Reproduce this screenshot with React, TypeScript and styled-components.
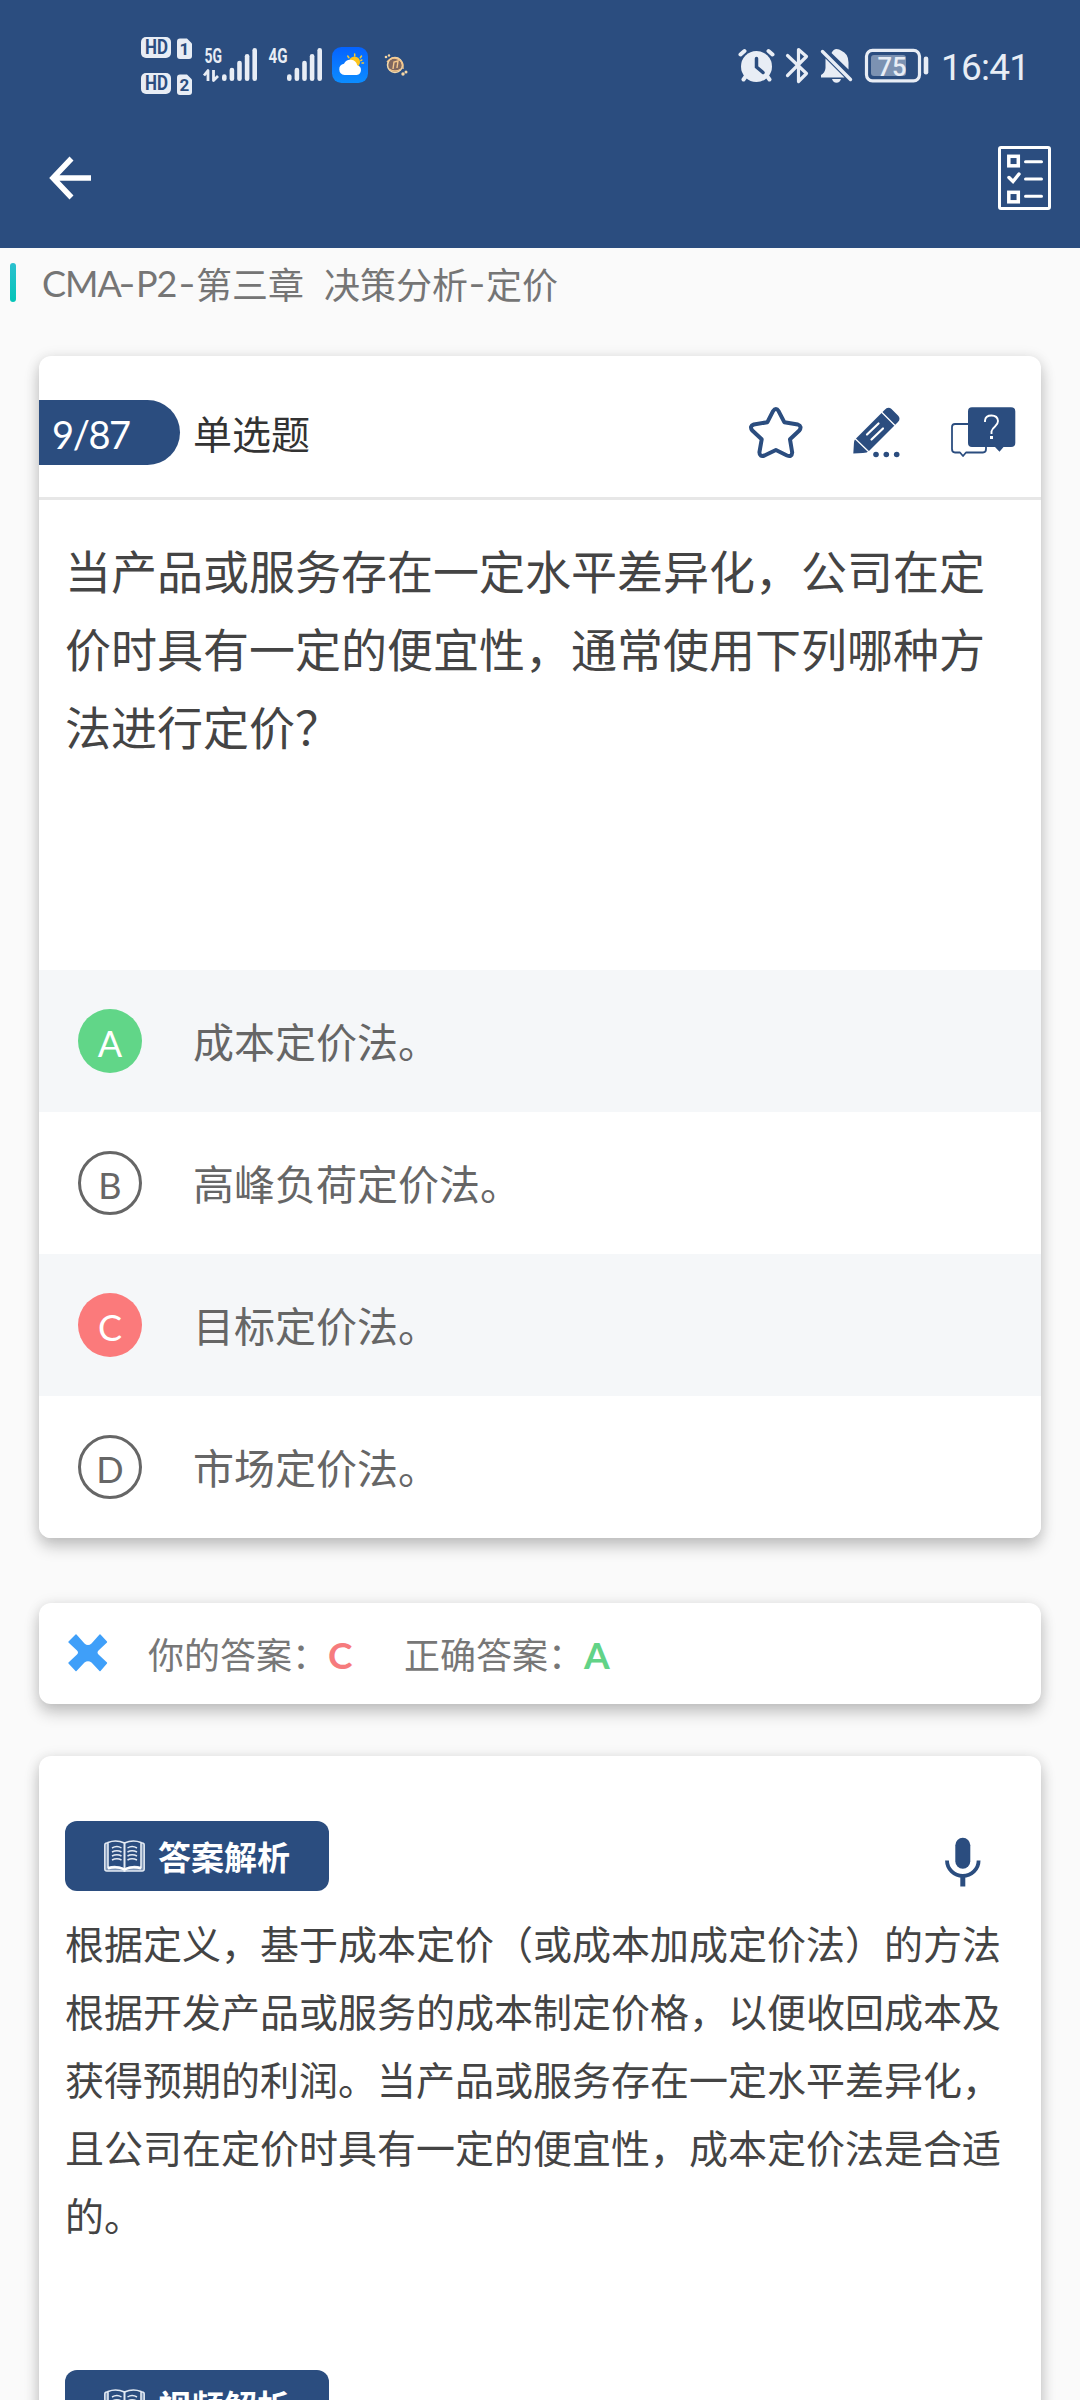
import React from "react";
import styled, { createGlobalStyle, css } from "styled-components";

const NAVY = "#2b4d7f";
const CJK = `"Noto Sans CJK SC", sans-serif`;

const GlobalStyle = createGlobalStyle`
  * { box-sizing: border-box; }
  body { margin: 0; background: #fafafa; font-family: ${CJK}; }
  svg { display: block; flex: none; }
`;

const Screen = styled.div`
  width: 1080px;
  height: 2400px;
  overflow: hidden;
  background: #fafafa;
`;

const Header = styled.header`
  height: 248px;
  background: ${NAVY};
`;

const StatusBar = styled.div`
  height: 130px;
  display: flex;
  justify-content: space-between;
  padding: 30px 53px 0 138px;
`;

const StatusGroup = styled.div`
  display: flex;
  align-items: flex-start;
`;

const Clock = styled.span`
  margin: 16px 0 0 10px;
  width: 86px;
  font: 400 37px/44px Roboto, sans-serif;
  letter-spacing: -0.8px;
  white-space: nowrap;
  color: #e8edf5;
`;

const NavBar = styled.nav`
  display: flex;
  justify-content: space-between;
  padding: 16px 29px 0 48px;
`;

const Chapter = styled.div`
  height: 108px;
  display: flex;
  align-items: flex-start;
  gap: 26px;
  padding: 15px 0 0 10px;
`;

const ChapterMark = styled.span`
  width: 6px;
  height: 39px;
  border-radius: 3px;
  background: linear-gradient(#2bc0cf, #04c5b8);
`;

const ChapterTitle = styled.h1`
  display: flex;
  margin: -6px 0 0;
  font: 400 36px/52px ${CJK};
  color: #757575;
  white-space: pre;
`;

const Latin = styled.span<{ $width: number }>`
  width: ${(p) => p.$width}px;
  font-family: Lato, sans-serif;
  letter-spacing: -1px;
`;

const Dash = styled.span`
  width: 18px;
  font-family: Lato, sans-serif;
  text-align: center;
  transform: scaleX(1.3);
`;

const Card = styled.section`
  margin: 0 39px;
  background: #fff;
  border-radius: 12px;
  box-shadow: 0 9px 16px rgba(0, 0, 0, 0.2), 0 1px 14px rgba(0, 0, 0, 0.1);
`;

const QuestionCard = styled(Card)`
  height: 1182px;
  overflow: hidden;
`;

const QuestionHead = styled.div`
  height: 144px;
  display: flex;
  align-items: flex-start;
  padding: 44px 24px 0 0;
  border-bottom: 3px solid #e7e7e7;
`;

const Counter = styled.span`
  width: 141px;
  height: 65px;
  padding-left: 13px;
  border-radius: 0 33px 33px 0;
  background: ${NAVY};
  color: #fff;
  font: 400 38px/69px Lato, sans-serif;
  letter-spacing: -1.4px;
`;

const Kind = styled.span`
  flex: 1;
  margin-left: 13px;
  font-size: 39px;
  line-height: 64px;
  color: #333;
`;

const Tools = styled.div`
  display: flex;
  gap: 50px;
  margin-top: 7px;
`;

const Stem = styled.p`
  height: 470px;
  margin: 0;
  padding: 30px 26px 0;
  font-size: 46px;
  line-height: 78px;
  color: #444;
`;

const Option = styled.div<{ $shaded: boolean }>`
  height: 142px;
  display: flex;
  align-items: center;
  gap: 51px;
  padding-left: 39px;
  background: ${(p) => (p.$shaded ? "#f5f7f9" : "#fff")};
  color: #666;
  font-size: 41px;
  line-height: 60px;
`;

type Mark = "right" | "wrong" | "none";

const Bullet = styled.span<{ $mark: Mark }>`
  width: 64px;
  height: 64px;
  display: flex;
  align-items: center;
  justify-content: center;
  border-radius: 50%;
  padding-top: 4px;
  font: 400 36px/44px Lato, sans-serif;
  ${(p) =>
    p.$mark === "none"
      ? css`
          border: 3px solid #666;
          color: #666;
        `
      : css`
          background: ${p.$mark === "right" ? "#61d688" : "#fb7a7b"};
          color: #fff;
        `}
`;

const OptionText = styled.span`
  padding-bottom: 2px;
`;

const ResultCard = styled(Card)`
  height: 101px;
  margin-top: 65px;
  display: flex;
  align-items: center;
  padding: 0 0 2px 28px;
  font-size: 36px;
  color: #777;
  white-space: nowrap;
`;

const ResultLabel = styled.span<{ $left: number }>`
  margin-left: ${(p) => p.$left}px;
  width: 180px;
  line-height: 52px;
`;

const ResultLetter = styled.b<{ $ok: boolean }>`
  width: 28px;
  font: 700 37px/44px Lato, sans-serif;
  padding-top: 4px;
  color: ${(p) => (p.$ok ? "#62d387" : "#f67b7d")};
`;

const AnalysisCard = styled(Card)`
  height: 760px;
  margin-top: 52px;
  padding: 65px 26px 0;
`;

const SectionRow = styled.div`
  display: flex;
  justify-content: space-between;
  padding-right: 33px;
`;

const Badge = styled.div`
  width: 264px;
  height: 70px;
  display: flex;
  gap: 13px;
  padding: 19px 0 0 39px;
  border-radius: 12px;
  background: ${NAVY};
  color: #fff;
`;

const BadgeText = styled.b`
  font-size: 33px;
  line-height: 48px;
  margin-top: -8px;
`;

const MicSlot = styled.div`
  margin-top: 16px;
`;

const Explanation = styled.p`
  margin: 17px 0 122px;
  font-size: 39px;
  line-height: 68px;
  color: #444;
`;

const light = "#e8edf5";

const SimBadges = () => (
  <svg width="60" height="70" viewBox="138 30 60 70">
    {[0, 36].map((dy, i) => (
      <g key={dy} transform={`translate(0 ${dy})`}>
        <rect x="141" y="37" width="30" height="21" rx="5" fill={light} />
        <text x="145" y="54.3" fontFamily="Roboto" fontWeight="700" fontSize="19.5" textLength="23" lengthAdjust="spacingAndGlyphs" fill={NAVY}>HD</text>
        <path d="M180 38.5h7l5 5V56q0 3-3 3h-9q-3 0-3-3V41.500q0-3 3-3z" fill={light} />
        <text x="184.300" y="54.500" textAnchor="middle" fontFamily="Roboto" fontWeight="700" fontSize="17" fill={NAVY}>{i + 1}</text>
      </g>
    ))}
  </svg>
);

const Signal = ({ label, data, width }: { label: string; data?: boolean; width: number }) => (
  <svg width={width} height="60" viewBox={`0 30 ${width} 60`}>
    <text x={data ? 6.5 : 5.5} y="62.700" fontFamily="Roboto" fontWeight="700" fontSize="19.500" textLength={data ? 17.5 : 19} lengthAdjust="spacingAndGlyphs" fill={light}>{label}</text>
    {data && <path d="M6 75.500 10 70.500V81M15.500 70V80.500L20 76" fill="none" stroke={light} strokeWidth="2.800" strokeLinejoin="round" />}
    {[74.3, 67.7, 60.7, 54, 48].map((top, i) => (
      <rect key={top} x={24 + i * 7.6} y={top} width="4.600" height={81 - top} rx="2.300" fill={light} />
    ))}
  </svg>
);

const Weather = () => (
  <svg width="52" height="60" viewBox="324 30 52 60">
    <defs>
      <linearGradient id="sky" x1="0" y1="0" x2="0" y2="1">
        <stop offset="0" stopColor="#0563ff" />
        <stop offset="1" stopColor="#0c8dff" />
      </linearGradient>
    </defs>
    <rect x="332" y="47" width="36" height="36" rx="9.500" fill="url(#sky)" />
    <g stroke="#f5c832" strokeWidth="1.500" strokeLinecap="round">
      <path d="M354.700 54v2M347.700 56l1.200 1.700M361.500 56l-1.200 1.700M363.500 63h-1.500M361.800 60l-1 .6" />
    </g>
    <circle cx="354.500" cy="62" r="5.500" fill="#fcc41c" />
    <path d="M344.500 75a5.700 5.700 0 0 1-.5-11.300 7 7 0 0 1 13.200 1.500 5 5 0 0 1-.5 9.800z" fill="#fff" />
  </svg>
);

const Planet = () => (
  <svg width="40" height="60" viewBox="376 30 40 60">
    <circle cx="395" cy="65" r="7.500" fill="#80675f" stroke="#f1d9ad" strokeWidth="1.500" />
    <path d="M387 62q5-6 11-3t5 10M389 69q6 4 12 0M393 69l1-7 4-1-1 7" fill="none" stroke="#f4c68b" strokeWidth="1.400" />
    <g fill="#f6d7a5">
      <circle cx="386" cy="57" r="1.300" />
      <circle cx="389" cy="55.500" r="1.200" />
      <circle cx="403" cy="74" r="1.700" />
      <circle cx="406" cy="72" r="1.500" />
    </g>
  </svg>
);

const StatusIcons = () => (
  <svg width="197" height="60" viewBox="734 30 197 60">
    <g fill="none" stroke={light} strokeLinecap="round">
      <path d="M740.500 54.500 744.500 51M772.500 54.500 768.500 51" strokeWidth="4" />
      <path d="M743.500 79.500 746 76M769.500 79.500 767 76" strokeWidth="4" />
    </g>
    <circle cx="756.500" cy="66.500" r="15.500" fill={light} />
    <path d="M756.500 58.500V67l6.500 5.500" fill="none" stroke={NAVY} strokeWidth="3.500" strokeLinecap="round" />
    <path d="M787.500 55.500 806.500 73.500 798.500 81.500V49.500L806.500 56.500 787.500 75.500" fill="none" stroke={light} strokeWidth="3.200" strokeLinejoin="round" strokeLinecap="round" />
    <path d="M831.500 53q2-4 5-4t4.500 1.500q7.500 3 7.500 12V69.500zM825.500 58.500 844.500 77.500H821v-2.500q4-2 4.500-7z" fill={light} />
    <path d="M832 79h9q-1 3.700-4.500 3.700T832 79z" fill={light} />
    <path d="M822.500 51.500 850.500 79.500" stroke={light} strokeWidth="3.400" strokeLinecap="round" />
    <rect x="866.500" y="50.300" width="53" height="30.500" rx="6" fill="none" stroke={light} strokeWidth="3.200" />
    <rect x="871" y="55" width="35" height="21" rx="3" fill="#7c92b2" />
    <text x="877.500" y="75.800" fontFamily="Roboto" fontWeight="500" fontSize="26" textLength="29" lengthAdjust="spacingAndGlyphs" fill={light}>75</text>
    <rect x="923.700" y="56.500" width="4.600" height="18" rx="2.300" fill={light} />
  </svg>
);

const BackArrow = () => (
  <svg width="46" height="64" viewBox="48 146 46 64">
    <path d="M91 178H53M71.500 158.500 53 178 71.500 197.500" fill="none" stroke="#fff" strokeWidth="5.500" />
  </svg>
);

const Checklist = () => (
  <svg width="53" height="64" viewBox="998 146 53 64" fill="none" stroke="#fff" strokeWidth="3">
    <rect x="999.500" y="147.500" width="50" height="61" rx="1.500" />
    <rect x="1008.800" y="156.300" width="9.500" height="9.500" strokeWidth="3.500" />
    <rect x="1008.800" y="192.300" width="9.500" height="9.500" strokeWidth="3.500" />
    <path d="M1009 177.500 1013 181.500 1019 174" strokeWidth="3.500" strokeLinecap="round" />
    <path d="M1025.500 161.700h16M1025.500 179h16M1025.500 196.300h16" strokeLinecap="round" />
  </svg>
);

const Star = () => (
  <svg width="54" height="52" viewBox="0 0 54 52">
    <path d="M23.900 4.300Q27-.2 29.700 4.300L35.300 15.200 48.800 17.500Q53.400 19.400 50.300 23.500L41 32.300 43.200 45.500Q42.800 50.300 38 48.500L26.900 43 15.500 48.500Q10.500 50.200 10.400 45.300L12.700 32.300 3.300 23.500Q.1 19.200 4.800 17.500L18.400 15.200Z" fill="none" stroke={NAVY} strokeWidth="4" strokeLinejoin="round" />
  </svg>
);

const Pencil = () => (
  <svg width="48" height="52" viewBox="0 0 48 52">
    <path d="M31.500 3Q35-1 38.500 2L45 8.500Q48 11.500 45 15L16.500 43.500Q14 46 10 46L.3 46.500 1 35Q1 33 3.500 31Z" fill={NAVY} />
    <path d="M28.500 5 42 18.500M2 31.500 16 45" fill="none" stroke="#fff" strokeWidth="1.300" />
    <path d="M14 27.500 25.500 16.500M18.500 32.500 30 21.500" stroke="#fff" strokeWidth="2.200" strokeLinecap="round" />
    <g fill={NAVY}>
      <circle cx="23" cy="47.500" r="2.800" />
      <circle cx="33.300" cy="47.500" r="2.800" />
      <circle cx="43.700" cy="47.500" r="2.800" />
    </g>
  </svg>
);

const Bubbles = () => (
  <svg width="66" height="52" viewBox="0 0 66 52">
    <path d="M17 17H4Q1 17 1 20V42Q1 45.500 4 45.500H9L12 49 15 45.500H32Q35 45.500 35 42V40" fill="none" stroke={NAVY} strokeWidth="1.800" strokeLinejoin="round" />
    <path d="M21 0.300H60Q64.300 .3 64.300 4.500V36Q64.300 40 60 40H52.500L48.500 44.700 44 40H21Q17 40 17 36V4.500Q17 .3 21 .3z" fill={NAVY} />
    <path d="M34 15V13.500Q34.500 8.500 40.500 8.500T47 14Q47 17 44 19.500T40.500 24.500V27" fill="none" stroke="#fff" strokeWidth="1.900" />
    <rect x="39" y="29" width="3" height="3" fill="#fff" />
  </svg>
);

const Cross = () => (
  <svg width="42" height="40" viewBox="0 0 42 40">
    <path d="M1.500 8.500 8.500 1.500 Q9 1 9.500 1.500L17.500 10.500Q21 13.500 24.500 10.500L32.500 1.500Q33 1 33.500 1.500L40 8.500Q40.300 9 40 9.500L31.500 17.500Q29.500 19.500 31.500 21.500L40 29.500Q40.300 30 40 30.500L33.500 38Q33 38.500 32.500 38L24.500 29.500Q21 27 17.500 29.500L9.500 38Q9 38.500 8.500 38L1.500 30.500Q1 30 1.500 29.500L10 21.500Q12 19.500 10 17.500L1.500 9.500Q1 9 1.500 8.500z" fill="#3f9ff9" />
  </svg>
);

const Book = () => (
  <svg width="41" height="33" viewBox="0 0 41 33" fill="none" stroke="#e3eaf3">
    <rect x=".8" y="3" width="39.400" height="28" rx="2" strokeWidth="1.500" fill="#7f96b6" />
    <path d="M4 2.500Q12-.8 20.500 3 29-.8 37 2.500V27.500Q28 25 20.500 29 13 25 4 27.500z" fill={NAVY} strokeWidth="1.600" />
    <path d="M20.500 3V32" strokeWidth="2" />
    <path d="M8 8Q13 5 17.500 8M8 12Q13 9.500 17.500 12M8 16Q13 13.500 17.500 16M8 20Q13 17.500 17.500 20M23.500 8Q28 5 33 8M23.500 12Q28 9.500 33 12M23.500 16Q28 13.500 33 16M23.500 20Q28 17.500 33 20" strokeWidth="1.500" />
    <path d="M4 28.500Q13 26 20.500 29.500 28 26 37 28.500" stroke="#fff" strokeWidth="2.200" />
  </svg>
);

const Mic = () => (
  <svg width="38" height="50" viewBox="0 0 38 50">
    <rect x="11.300" y=".8" width="15" height="31" rx="7.500" fill={NAVY} />
    <path d="M3 23.500A15.800 15.300 0 0 0 34.600 23.500" fill="none" stroke={NAVY} strokeWidth="3.800" />
    <path d="M18.800 38V49.500" stroke={NAVY} strokeWidth="5" />
  </svg>
);

const options: { letter: string; text: string; mark: Mark }[] = [
  { letter: "A", text: "成本定价法。", mark: "right" },
  { letter: "B", text: "高峰负荷定价法。", mark: "none" },
  { letter: "C", text: "目标定价法。", mark: "wrong" },
  { letter: "D", text: "市场定价法。", mark: "none" },
];

const SectionBadge = ({ label }: { label: string }) => (
  <Badge>
    <Book />
    <BadgeText>{label}</BadgeText>
  </Badge>
);

export default function App() {
  return (
    <Screen>
      <GlobalStyle />
      <Header>
        <StatusBar>
          <StatusGroup>
            <SimBadges />
            <Signal label="5G" data width={65} />
            <Signal label="4G" width={61} />
            <Weather />
            <Planet />
          </StatusGroup>
          <StatusGroup>
            <StatusIcons />
            <Clock>16:41</Clock>
          </StatusGroup>
        </StatusBar>
        <NavBar>
          <BackArrow />
          <Checklist />
        </NavBar>
      </Header>
      <Chapter>
        <ChapterMark />
        <ChapterTitle>
          <Latin $width={76}>CMA</Latin>
          <Dash>-</Dash>
          <Latin $width={42}>P2</Latin>
          <Dash>-</Dash>
          <span>第三章</span>
          <Latin $width={20}>{"  "}</Latin>
          <span>决策分析</span>
          <Dash>-</Dash>
          <span>定价</span>
        </ChapterTitle>
      </Chapter>
      <QuestionCard>
        <QuestionHead>
          <Counter>9/87</Counter>
          <Kind>单选题</Kind>
          <Tools>
            <Star />
            <Pencil />
            <Bubbles />
          </Tools>
        </QuestionHead>
        <Stem>当产品或服务存在一定水平差异化，公司在定价时具有一定的便宜性，通常使用下列哪种方法进行定价？</Stem>
        {options.map((o, i) => (
          <Option key={o.letter} $shaded={i % 2 === 0}>
            <Bullet $mark={o.mark}>{o.letter}</Bullet>
            <OptionText>{o.text}</OptionText>
          </Option>
        ))}
      </QuestionCard>
      <ResultCard>
        <Cross />
        <ResultLabel $left={39}>你的答案：</ResultLabel>
        <ResultLetter $ok={false}>C</ResultLetter>
        <ResultLabel $left={48}>正确答案：</ResultLabel>
        <ResultLetter $ok>A</ResultLetter>
      </ResultCard>
      <AnalysisCard>
        <SectionRow>
          <SectionBadge label="答案解析" />
          <MicSlot>
            <Mic />
          </MicSlot>
        </SectionRow>
        <Explanation>
          根据定义，基于成本定价（或成本加成定价法）的方法根据开发产品或服务的成本制定价格，以便收回成本及获得预期的利润。当产品或服务存在一定水平差异化，且公司在定价时具有一定的便宜性，成本定价法是合适的。
        </Explanation>
        <SectionBadge label="视频解析" />
      </AnalysisCard>
    </Screen>
  );
}
